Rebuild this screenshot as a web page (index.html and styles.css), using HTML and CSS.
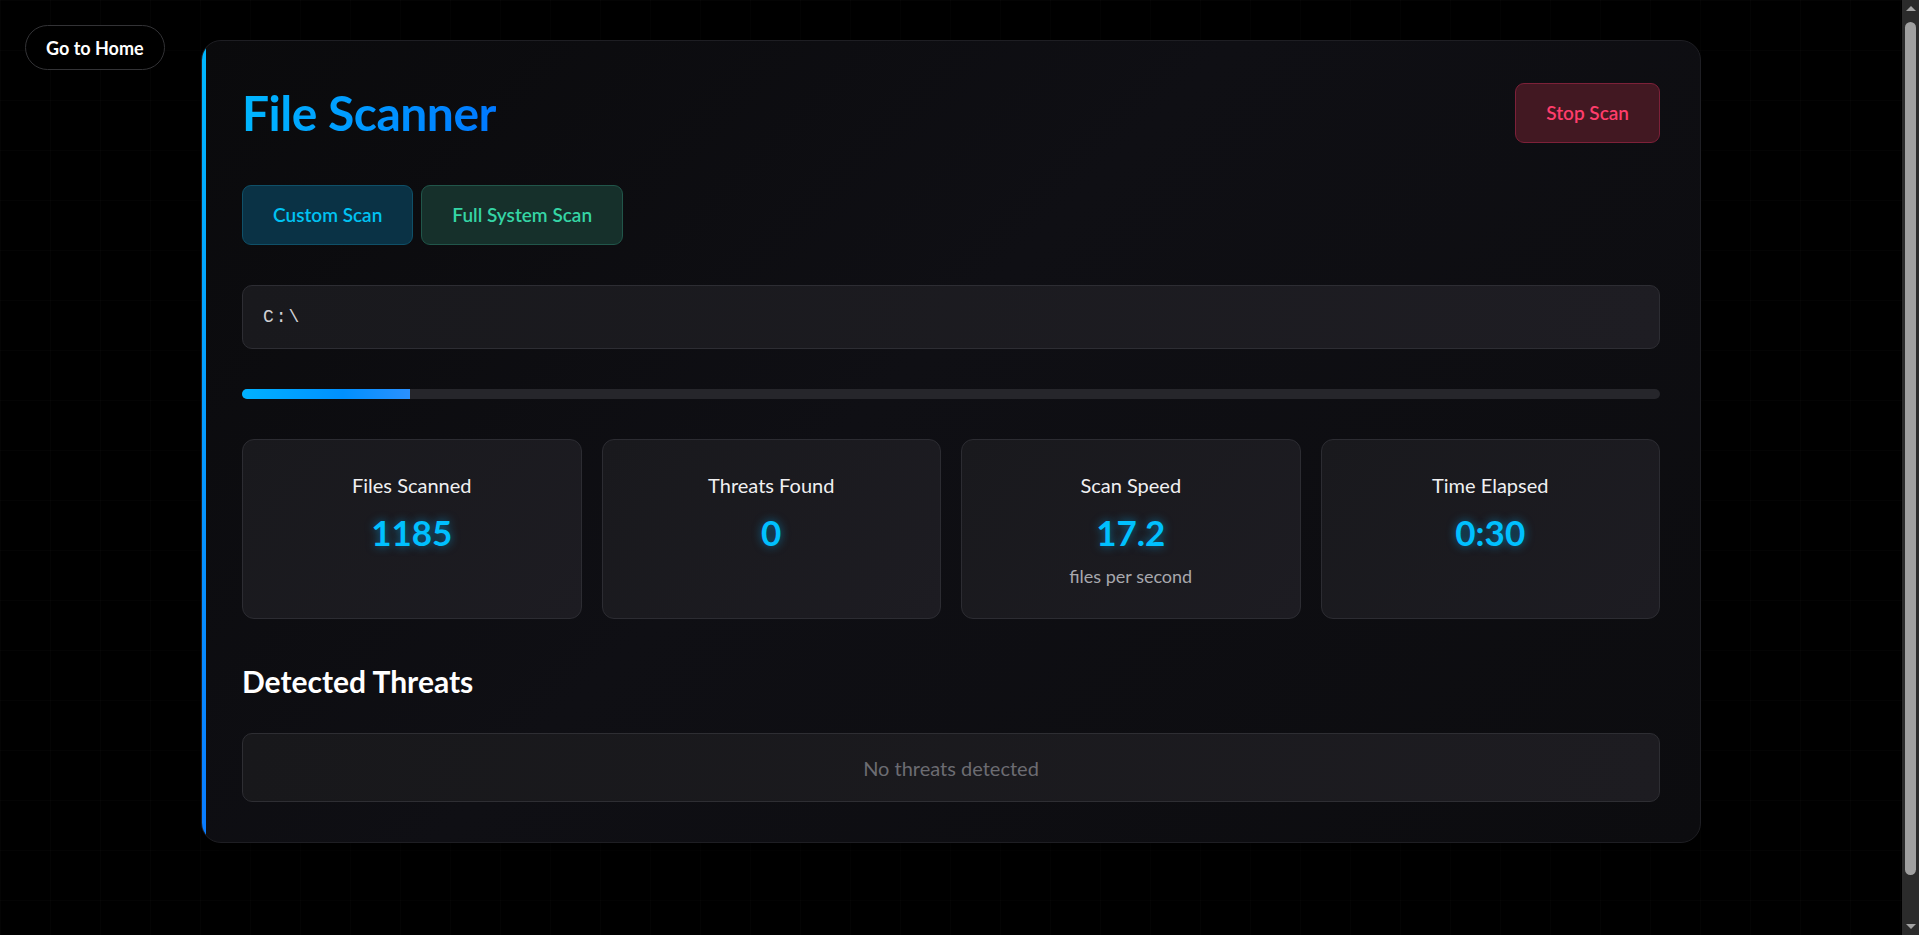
FILE: index.html
```html
<!DOCTYPE html>
<html lang="en">
<head>
<meta charset="utf-8">
<title>File Scanner</title>
<link rel="stylesheet" href="styles.css">
</head>
<body>
<button class="home-btn">Go to Home</button>
<div class="page">
  <main class="scanner">
    <header class="scanner-header">
      <h1 class="title">File Scanner</h1>
      <button class="btn btn-stop">Stop Scan</button>
    </header>
    <div class="modes">
      <button class="btn btn-custom">Custom Scan</button>
      <button class="btn btn-full">Full System Scan</button>
    </div>
    <div class="path-input">C:\</div>
    <div class="progress"><div class="progress-fill" style="width: 11.85%"></div></div>
    <div class="stats">
      <div class="stat">
        <div class="stat-label">Files Scanned</div>
        <div class="stat-value">1185</div>
      </div>
      <div class="stat">
        <div class="stat-label">Threats Found</div>
        <div class="stat-value">0</div>
      </div>
      <div class="stat">
        <div class="stat-label">Scan Speed</div>
        <div class="stat-value">17.2</div>
        <div class="stat-sub">files per second</div>
      </div>
      <div class="stat">
        <div class="stat-label">Time Elapsed</div>
        <div class="stat-value">0:30</div>
      </div>
    </div>
    <section class="threats">
      <h2 class="threats-title">Detected Threats</h2>
      <div class="threat-list">No threats detected</div>
    </section>
  </main>
</div>
<div class="scrollbar" aria-hidden="true">
  <div class="scroll-arrow scroll-up"></div>
  <div class="scroll-track"><div class="scroll-thumb"></div></div>
  <div class="scroll-arrow scroll-down"></div>
</div>
</body>
</html>
```
FILE: styles.css
```css
:root {
  color-scheme: dark;
}

* {
  box-sizing: border-box;
}

html, body {
  margin: 0;
  padding: 0;
}

body {
  background-color: #000;
  background-image:
    linear-gradient(rgba(255,255,255,0.016) 1px, transparent 1px),
    linear-gradient(90deg, rgba(255,255,255,0.016) 1px, transparent 1px);
  background-size: 50px 50px;
  font-family: Lato, "Noto Sans", sans-serif;
  color: #fff;
  overflow: hidden;
}

.home-btn {
  position: absolute;
  top: 25px;
  left: 25px;
  height: 45px;
  padding: 0 20px;
  border: 1px solid #333336;
  border-radius: 999px;
  background: #000;
  color: #fff;
  font-family: inherit;
  font-size: 18px;
  font-weight: 700;
  line-height: 24px;
}

.page {
  height: 100vh;
  padding: 40px 17px 0 0;
  display: flex;
  justify-content: center;
  align-items: flex-start;
}

.scanner {
  position: relative;
  width: 1500px;
  flex-shrink: 0;
  padding: 40px;
  border: 1px solid #1e1e23;
  border-radius: 20px;
  overflow: hidden;
  background: linear-gradient(135deg, #0a0a0c 0%, #0f0f14 45%, #0c0c0f 100%);
  box-shadow: 0 10px 40px rgba(0,0,0,0.6);
  display: flex;
  flex-direction: column;
  gap: 40px;
}

.scanner::before {
  content: "";
  position: absolute;
  left: 0;
  top: 0;
  bottom: 0;
  width: 4px;
  background: linear-gradient(180deg, #00b8ff, #0a7cff);
}

.scanner-header {
  display: flex;
  justify-content: space-between;
  align-items: center;
  height: 64px;
}

.title {
  margin: 0;
  font-size: 48px;
  line-height: 64px;
  font-weight: 700;
  background: linear-gradient(90deg, #00b6ff, #0078ff);
  -webkit-background-clip: text;
  background-clip: text;
  color: transparent;
  letter-spacing: -0.5px;
}

.btn {
  font-family: inherit;
  font-size: 19px;
  font-weight: 600;
  line-height: 24px;
  padding: 17px 30px;
  border-radius: 9px;
  border: 1px solid transparent;
  cursor: pointer;
}

.btn-stop {
  background: #421822;
  border-color: #7d2139;
  color: #ff3d6b;
}

.modes {
  display: flex;
  gap: 8px;
}

.btn-custom {
  background: #0a3245;
  border-color: #0f5068;
  color: #00c2f2;
}

.btn-full {
  background: #16302b;
  border-color: #21564a;
  color: #35d5a5;
}

.path-input {
  height: 64px;
  padding: 0 20px;
  display: flex;
  align-items: center;
  background: linear-gradient(100deg, #19191d, #1e1d23);
  border: 1px solid #2d2d33;
  border-radius: 10px;
  font-family: "Liberation Mono", monospace;
  font-size: 18px;
  letter-spacing: 2px;
  color: #d0d0d4;
}

.progress {
  height: 10px;
  border-radius: 5px;
  background: #26262b;
  overflow: hidden;
}

.progress-fill {
  height: 100%;
  background: linear-gradient(90deg, #00b2ff, #0090ff 60%, #2a90ff);
}

.stats {
  display: grid;
  grid-template-columns: repeat(4, 1fr);
  gap: 20px;
}

.stat {
  padding: 32px 20px 30px;
  background: linear-gradient(135deg, #19191d, #1d1c22);
  border: 1px solid #2c2c32;
  border-radius: 12px;
  text-align: center;
}

.stat-label {
  font-size: 20px;
  line-height: 26px;
  color: #f0f0f2;
}

.stat-value {
  margin-top: 10px;
  font-size: 35px;
  line-height: 48px;
  font-weight: 700;
  color: #00c0ff;
  text-shadow: 0 0 10px rgba(0, 180, 255, 0.55);
}

.stat-sub {
  margin-top: 8px;
  font-size: 18px;
  line-height: 24px;
  color: #a8a8ae;
}

.threats {
  margin-top: 2px;
  display: flex;
  flex-direction: column;
  gap: 32px;
}

.threats-title {
  margin: 0;
  font-size: 30px;
  line-height: 40px;
  font-weight: 700;
  color: #fff;
}

.threat-list {
  height: 69px;
  display: flex;
  align-items: center;
  justify-content: center;
  background: linear-gradient(100deg, #18181b, #1d1c21);
  border: 1px solid #2e2e33;
  border-radius: 10px;
  font-size: 20px;
  color: #6c6c72;
}

.scrollbar {
  position: fixed;
  top: 0;
  right: 0;
  bottom: 0;
  width: 17px;
  background: #2b2b2b;
  display: flex;
  flex-direction: column;
  align-items: center;
}

.scroll-arrow {
  height: 17px;
  width: 17px;
  display: flex;
  align-items: center;
  justify-content: center;
}

.scroll-up::before,
.scroll-down::before {
  content: "";
  width: 0;
  height: 0;
  border-left: 5px solid transparent;
  border-right: 5px solid transparent;
}

.scroll-up::before {
  border-bottom: 5px solid #a3a3a3;
}

.scroll-down::before {
  border-top: 5px solid #a3a3a3;
}

.scroll-track {
  flex: 1;
  width: 100%;
  display: flex;
  justify-content: center;
}

.scroll-thumb {
  width: 11px;
  height: 853px;
  margin-top: 5px;
  border-radius: 6px;
  background: #a0a0a0;
}
```
